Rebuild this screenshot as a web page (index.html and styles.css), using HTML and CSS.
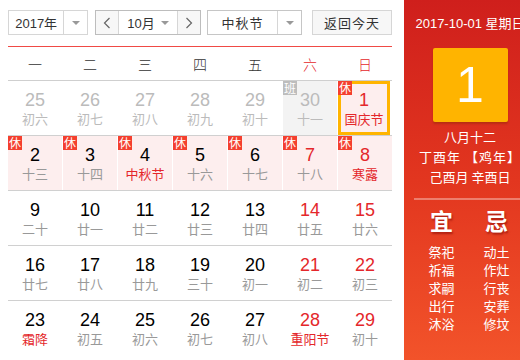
FILE: index.html
```html
<!DOCTYPE html>
<html lang="zh-CN">
<head>
  <meta charset="UTF-8">
  <meta name="viewport" content="width=device-width, initial-scale=1.0">
  <title>万年历</title>
  <link rel="stylesheet" href="styles.css">
</head>
<body>
  <div class="calendar">

    <!-- 左侧日历 -->
    <div class="cal-main">
      <div class="toolbar">
        <div class="select year-select">
          <span class="select-text">2017年</span>
          <span class="select-arrow"><i class="tri"></i></span>
        </div>

        <div class="month-group">
          <span class="nav-btn">
            <svg width="8" height="12" viewBox="0 0 8 12"><path d="M6.5 1 L1.5 6 L6.5 11" fill="none" stroke="#666" stroke-width="1.2"/></svg>
          </span>
          <span class="month-text">10月 <i class="tri"></i></span>
          <span class="nav-btn">
            <svg width="8" height="12" viewBox="0 0 8 12"><path d="M1.5 1 L6.5 6 L1.5 11" fill="none" stroke="#666" stroke-width="1.2"/></svg>
          </span>
        </div>

        <div class="select holiday-select">
          <span class="select-text">中秋节</span>
          <span class="select-arrow"><i class="tri"></i></span>
        </div>

        <button type="button" class="today-btn">返回今天</button>
      </div>

      <div class="week-head">
        <span>一</span><span>二</span><span>三</span><span>四</span><span>五</span>
        <span class="weekend">六</span><span class="weekend">日</span>
      </div>

      <div class="days">
        <!-- 第一周 -->
        <div class="row">
          <div class="day other"><b>25</b><em>初六</em></div>
          <div class="day other"><b>26</b><em>初七</em></div>
          <div class="day other"><b>27</b><em>初八</em></div>
          <div class="day other"><b>28</b><em>初九</em></div>
          <div class="day other"><b>29</b><em>初十</em></div>
          <div class="day other work"><span class="tag tag-work">班</span><b>30</b><em>十一</em></div>
          <div class="day rest selected red"><span class="tag">休</span><b>1</b><em class="fest">国庆节</em></div>
        </div>
        <!-- 第二周 -->
        <div class="row">
          <div class="day rest"><span class="tag">休</span><b>2</b><em>十三</em></div>
          <div class="day rest"><span class="tag">休</span><b>3</b><em>十四</em></div>
          <div class="day rest"><span class="tag">休</span><b>4</b><em class="fest">中秋节</em></div>
          <div class="day rest"><span class="tag">休</span><b>5</b><em>十六</em></div>
          <div class="day rest"><span class="tag">休</span><b>6</b><em>十七</em></div>
          <div class="day rest red"><span class="tag">休</span><b>7</b><em>十八</em></div>
          <div class="day rest red"><span class="tag">休</span><b>8</b><em class="fest">寒露</em></div>
        </div>
        <!-- 第三周 -->
        <div class="row">
          <div class="day"><b>9</b><em>二十</em></div>
          <div class="day"><b>10</b><em>廿一</em></div>
          <div class="day"><b>11</b><em>廿二</em></div>
          <div class="day"><b>12</b><em>廿三</em></div>
          <div class="day"><b>13</b><em>廿四</em></div>
          <div class="day red"><b>14</b><em>廿五</em></div>
          <div class="day red"><b>15</b><em>廿六</em></div>
        </div>
        <!-- 第四周 -->
        <div class="row">
          <div class="day"><b>16</b><em>廿七</em></div>
          <div class="day"><b>17</b><em>廿八</em></div>
          <div class="day"><b>18</b><em>廿九</em></div>
          <div class="day"><b>19</b><em>三十</em></div>
          <div class="day"><b>20</b><em>初一</em></div>
          <div class="day red"><b>21</b><em>初二</em></div>
          <div class="day red"><b>22</b><em>初三</em></div>
        </div>
        <!-- 第五周 -->
        <div class="row">
          <div class="day"><b>23</b><em class="fest">霜降</em></div>
          <div class="day"><b>24</b><em>初五</em></div>
          <div class="day"><b>25</b><em>初六</em></div>
          <div class="day"><b>26</b><em>初七</em></div>
          <div class="day"><b>27</b><em>初八</em></div>
          <div class="day red"><b>28</b><em class="fest">重阳节</em></div>
          <div class="day red"><b>29</b><em>初十</em></div>
        </div>
      </div>
    </div>

    <!-- 右侧详情 -->
    <div class="cal-side">
      <div class="side-date">2017-10-01 星期日</div>
      <div class="big-day">1</div>
      <div class="lunar-info">
        <p>八月十二</p>
        <p class="zodiac">丁酉年 【鸡年】</p>
        <p>己酉月 辛酉日</p>
      </div>
      <div class="almanac">
        <div class="alm-col">
          <h3>宜</h3>
          <p>祭祀</p><p>祈福</p><p>求嗣</p><p>出行</p><p>沐浴</p>
        </div>
        <div class="alm-col">
          <h3>忌</h3>
          <p>动土</p><p>作灶</p><p>行丧</p><p>安葬</p><p>修坟</p>
        </div>
      </div>
    </div>

  </div>
</body>
</html>
```

FILE: styles.css
```css
body {
  margin: 0;
  width: 520px;
  height: 360px;
  overflow: hidden;
  background: #fff;
  font-family: 'Liberation Sans', 'Noto Sans CJK SC', sans-serif;
  color: #333;
}

.calendar {
  display: flex;
  width: 536px;
  height: 360px;
}

.cal-main {
  width: 384px;
  padding: 10px 12px 0 8px;
}

/* 顶部选择条 */
.toolbar {
  display: flex;
  height: 25px;
  font-size: 13px;
}

.select {
  display: flex;
  border: 1px solid #d6d6d6;
  box-sizing: border-box;
  height: 25px;
  background: #fff;
}

.select-text {
  display: flex;
  align-items: center;
  justify-content: center;
  color: #333;
}

.select-arrow {
  display: flex;
  align-items: center;
  justify-content: center;
  width: 23px;
  border-left: 1px solid #d6d6d6;
}

.tri {
  display: inline-block;
  width: 0;
  height: 0;
  border-left: 4px solid transparent;
  border-right: 4px solid transparent;
  border-top: 4px solid #999;
}

.year-select {
  width: 80px;
}

.year-select .select-text {
  width: 55px;
}

.month-group {
  display: flex;
  margin-left: 7px;
  width: 106px;
  height: 25px;
  box-sizing: border-box;
  border: 1px solid #bdbdbd;
}

.nav-btn {
  display: flex;
  align-items: center;
  justify-content: center;
  width: 22px;
  background: #f7f7f7;
}

.month-text {
  display: flex;
  align-items: center;
  justify-content: center;
  gap: 6px;
  width: 60px;
  border-left: 1px solid #d6d6d6;
  border-right: 1px solid #d6d6d6;
  background: #fff;
}

.holiday-select {
  margin-left: 6px;
  width: 95px;
  border-color: #c6c6c6;
}

.holiday-select .select-text {
  width: 70px;
  letter-spacing: 1px;
}

.today-btn {
  margin-left: 10px;
  width: 81px;
  height: 25px;
  padding: 0;
  border: 1px solid #d6d6d6;
  background: #f7f7f7;
  color: #333;
  font-family: inherit;
  font-size: 13px;
  letter-spacing: 1px;
}

/* 星期表头 */
.week-head {
  display: grid;
  grid-template-columns: repeat(7, 54px);
  column-gap: 1px;
  margin-top: 11px;
  height: 33px;
  border-top: 1px solid #f04a45;
  border-bottom: 1px solid #cfcfcf;
  font-size: 14px;
  font-family: 'Noto Sans CJK SC', sans-serif;
  font-weight: 300;
}

.week-head span {
  display: flex;
  align-items: center;
  justify-content: center;
}

.week-head .weekend {
  color: #e4272b;
}

/* 日期格子 */
.row {
  display: grid;
  grid-template-columns: repeat(7, 54px);
  column-gap: 1px;
  height: 54px;
  border-bottom: 1px solid #d0d0d0;
}

.row:last-child {
  border-bottom: none;
}

.day {
  position: relative;
  display: flex;
  flex-direction: column;
  align-items: center;
  padding-top: 9px;
  box-sizing: border-box;
}

.day b {
  font-weight: normal;
  font-size: 18px;
  line-height: 20px;
  color: #000;
}

.day em {
  font-style: normal;
  font-size: 13px;
  line-height: 18px;
  color: #999;
  font-family: 'Noto Sans CJK SC', sans-serif;
}

.day.red b {
  color: #e4272b;
}

.day em.fest {
  color: #e4272b;
}

.day.other b,
.day.other em {
  color: #bbb;
}

.day.work {
  background: #f3f3f3;
}

.day.rest {
  background: #fdeeee;
}

.day.selected {
  border: 3px solid #ffb400;
  padding-top: 6px;
  width: 52px;
}

.tag {
  position: absolute;
  left: 0;
  top: 0;
  width: 14px;
  height: 14px;
  line-height: 14px;
  text-align: center;
  font-size: 12px;
  color: #fff;
  background: #f43f2e;
  font-family: 'Noto Sans CJK SC', sans-serif;
}

.day.selected .tag {
  left: -3px;
  top: -3px;
}

.tag-work {
  background: #bdbdbd;
}

/* 右侧面板 */
.cal-side {
  width: 132px;
  height: 360px;
  background: linear-gradient(to bottom, #cf1f1c 0%, #e2361f 50%, #f2532a 100%);
  color: #fff;
  text-align: center;
  box-sizing: border-box;
  padding: 16px 10px 0;
}

.side-date {
  font-size: 13px;
  line-height: 16px;
  white-space: nowrap;
  margin: 0 -10px;
}

.big-day {
  width: 75px;
  height: 74px;
  margin: 16px auto 0;
  background: #ffb400;
  border-radius: 2px;
  box-shadow: 0 2px 2px rgba(120, 40, 0, 0.35);
  font-size: 50px;
  line-height: 74px;
}

.lunar-info {
  margin-top: 5px;
  padding-bottom: 11px;
  border-bottom: 2px solid rgba(255, 255, 255, 0.35);
  margin-right: -10px;
  font-size: 13px;
  font-family: 'Noto Sans CJK SC', sans-serif;
}

.lunar-info p {
  margin: 0;
  line-height: 20px;
  padding-right: 10px;
  white-space: nowrap;
}

.lunar-info .zodiac {
  letter-spacing: 1px;
}

.almanac {
  display: flex;
  margin-top: 5px;
  font-family: 'Noto Sans CJK SC', sans-serif;
}

.alm-col {
  width: 55px;
}

.alm-col h3 {
  margin: 0 0 8px;
  font-size: 23px;
  line-height: 30px;
  font-weight: bold;
  text-shadow: 1px 2px 2px rgba(120, 0, 0, 0.5);
}

.alm-col p {
  margin: 0;
  font-size: 13px;
  line-height: 18px;
}
```
